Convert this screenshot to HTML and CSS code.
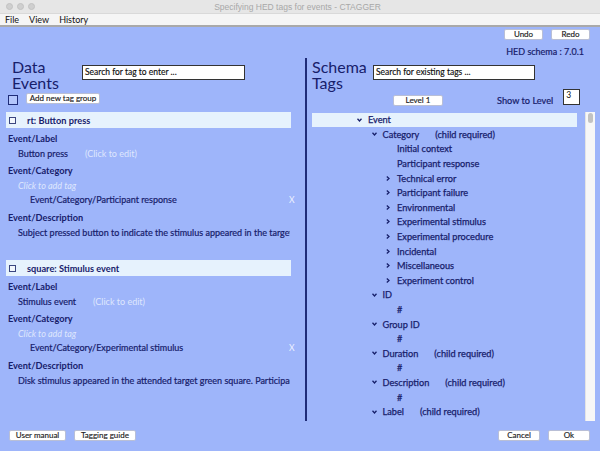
FILE: index.html
```html
<!DOCTYPE html>
<html>
<head>
<meta charset="utf-8">
<link rel="stylesheet" href="styles.css">
</head>
<body>
<div class="window">
  <div class="titlebar">
    <div class="lights"><span></span><span></span><span></span></div>
    <div class="title">Specifying HED tags for events - CTAGGER</div>
  </div>
  <div class="menubar"><span>File</span><span>View</span><span>History</span></div>
  <div class="main">
    <div class="toprow"><div class="btn w-undo">Undo</div><div class="btn w-undo">Redo</div></div>
    <div class="schema-ver">HED schema : 7.0.1</div>
    <div class="panels">
      <section class="left">
        <div class="phead">
          <div class="ptitle"><div>Data</div><div>Events</div></div>
          <div class="search">Search for tag to enter ...</div>
        </div>
        <div class="ctrlrow">
          <span class="cbox big"></span>
          <div class="btn w-add">Add new tag group</div>
        </div>
        <div class="events">
          <div class="event">
            <div class="ehead"><span class="cbox small"></span><span>rt: Button press</span></div>
            <div class="lbl">Event/Label</div>
            <div class="val">Button press<span class="hint">(Click to edit)</span></div>
            <div class="lbl cat">Event/Category</div>
            <div class="add">Click to add tag</div>
            <div class="tag"><span>Event/Category/Participant response</span><span class="x">X</span></div>
            <div class="lbl desc">Event/Description</div>
            <div class="val clip">Subject pressed button to indicate the stimulus appeared in the target location.</div>
          </div>
          <div class="event second">
            <div class="ehead"><span class="cbox small"></span><span>square: Stimulus event</span></div>
            <div class="lbl">Event/Label</div>
            <div class="val">Stimulus event<span class="hint">(Click to edit)</span></div>
            <div class="lbl cat">Event/Category</div>
            <div class="add">Click to add tag</div>
            <div class="tag"><span>Event/Category/Experimental stimulus</span><span class="x">X</span></div>
            <div class="lbl desc">Event/Description</div>
            <div class="val clip">Disk stimulus appeared in the attended target green square. Participant responded.</div>
          </div>
        </div>
      </section>
      <div class="divider"></div>
      <section class="right">
        <div class="phead">
          <div class="ptitle rt"><div>Schema</div><div>Tags</div></div>
          <div class="search rs">Search for existing tags ...</div>
        </div>
        <div class="ctrlrow rctrl">
          <div class="btn w-level">Level 1</div>
          <span class="showlvl">Show to Level</span>
          <div class="lvlbox">3</div>
        </div>
        <div class="treewrap">
          <div class="tree">
            <div class="node l0 sel"><span class="chev"><svg width="5" height="4" viewBox="0 0 5 4"><polyline points="0.5,0.8 2.5,3 4.5,0.8" /></svg></span><span>Event</span></div>
            <div class="node l1"><span class="chev"><svg width="5" height="4" viewBox="0 0 5 4"><polyline points="0.5,0.8 2.5,3 4.5,0.8" /></svg></span><span>Category</span><span class="req">(child required)</span></div>
            <div class="node l2"><span class="chev"></span><span>Initial context</span></div>
            <div class="node l2"><span class="chev"></span><span>Participant response</span></div>
            <div class="node l2"><span class="chev"><svg width="4" height="5" viewBox="0 0 4 5"><polyline points="0.8,0.5 3,2.5 0.8,4.5" /></svg></span><span>Technical error</span></div>
            <div class="node l2"><span class="chev"><svg width="4" height="5" viewBox="0 0 4 5"><polyline points="0.8,0.5 3,2.5 0.8,4.5" /></svg></span><span>Participant failure</span></div>
            <div class="node l2"><span class="chev"><svg width="4" height="5" viewBox="0 0 4 5"><polyline points="0.8,0.5 3,2.5 0.8,4.5" /></svg></span><span>Environmental</span></div>
            <div class="node l2"><span class="chev"><svg width="4" height="5" viewBox="0 0 4 5"><polyline points="0.8,0.5 3,2.5 0.8,4.5" /></svg></span><span>Experimental stimulus</span></div>
            <div class="node l2"><span class="chev"><svg width="4" height="5" viewBox="0 0 4 5"><polyline points="0.8,0.5 3,2.5 0.8,4.5" /></svg></span><span>Experimental procedure</span></div>
            <div class="node l2"><span class="chev"><svg width="4" height="5" viewBox="0 0 4 5"><polyline points="0.8,0.5 3,2.5 0.8,4.5" /></svg></span><span>Incidental</span></div>
            <div class="node l2"><span class="chev"><svg width="4" height="5" viewBox="0 0 4 5"><polyline points="0.8,0.5 3,2.5 0.8,4.5" /></svg></span><span>Miscellaneous</span></div>
            <div class="node l2"><span class="chev"><svg width="4" height="5" viewBox="0 0 4 5"><polyline points="0.8,0.5 3,2.5 0.8,4.5" /></svg></span><span>Experiment control</span></div>
            <div class="node l1"><span class="chev"><svg width="5" height="4" viewBox="0 0 5 4"><polyline points="0.5,0.8 2.5,3 4.5,0.8" /></svg></span><span>ID</span></div>
            <div class="node l2"><span class="chev"></span><span>#</span></div>
            <div class="node l1"><span class="chev"><svg width="5" height="4" viewBox="0 0 5 4"><polyline points="0.5,0.8 2.5,3 4.5,0.8" /></svg></span><span>Group ID</span></div>
            <div class="node l2"><span class="chev"></span><span>#</span></div>
            <div class="node l1"><span class="chev"><svg width="5" height="4" viewBox="0 0 5 4"><polyline points="0.5,0.8 2.5,3 4.5,0.8" /></svg></span><span>Duration</span><span class="req">(child required)</span></div>
            <div class="node l2"><span class="chev"></span><span>#</span></div>
            <div class="node l1"><span class="chev"><svg width="5" height="4" viewBox="0 0 5 4"><polyline points="0.5,0.8 2.5,3 4.5,0.8" /></svg></span><span>Description</span><span class="req">(child required)</span></div>
            <div class="node l2"><span class="chev"></span><span>#</span></div>
            <div class="node l1"><span class="chev"><svg width="5" height="4" viewBox="0 0 5 4"><polyline points="0.5,0.8 2.5,3 4.5,0.8" /></svg></span><span>Label</span><span class="req">(child required)</span></div>
          </div>
          <div class="scrollbar"><div class="thumb"></div></div>
        </div>
      </section>
    </div>
    <div class="footer">
      <div class="fgroup">
        <div class="btn w-manual">User manual</div>
        <div class="btn w-guide">Tagging guide</div>
      </div>
      <div class="fgroup">
        <div class="btn w-ok">Cancel</div>
        <div class="btn w-ok">Ok</div>
      </div>
    </div>
  </div>
</div>
</body>
</html>
```
FILE: styles.css
```css
* { box-sizing: border-box; }
html, body { margin: 0; padding: 0; }
body {
  width: 600px;
  height: 451px;
  overflow: hidden;
  font-family: "Lato", "Open Sans", sans-serif;
  font-size: 9px;
  color: #17206b;
}
.window { width: 600px; height: 451px; display: flex; flex-direction: column; background: #9eb5fa; }

.titlebar {
  height: 13px;
  background: #e6e6e6;
  display: flex;
  align-items: center;
}
.lights { display: flex; gap: 4px; padding-left: 6px; }
.lights span { width: 7px; height: 7px; border-radius: 50%; background: #cfcfcf; border: 1px solid #c2c2c2; }
.title {
  flex: 1;
  text-align: center;
  font-family: "Liberation Sans", sans-serif;
  font-size: 8.5px;
  color: #a8a8a8;
  margin-right: 40px;
}
.menubar {
  height: 14px;
  background: #f5f5f5;
  border-top: 1px solid #d9d9d9;
  border-bottom: 2px solid #a9a9a9;
  display: flex;
  align-items: center;
  padding-left: 5px;
  font-size: 9px;
  color: #111;
}
.menubar span { margin-right: 10px; }

.main { flex: 1; display: flex; flex-direction: column; }

.btn {
  background: #fff;
  border: 1px solid #b9bfd6;
  border-radius: 2px;
  height: 11px;
  font-size: 8px;
  line-height: 9px;
  color: #222;
  text-align: center;
  -webkit-text-stroke: 0.15px #222;
}
.toprow { display: flex; justify-content: flex-end; gap: 8px; padding: 2px 10px 0 0; height: 13px; }
.w-undo { width: 39px; }
.schema-ver { text-align: right; padding-right: 16px; margin-top: 5px; line-height: 14px; height: 12px; font-size: 9px; -webkit-text-stroke: 0.2px #17206b; }

.panels { display: flex; height: 364px; }
.left { width: 305px; padding-left: 6px; }
.divider { width: 2px; background: #1f2c78; margin: 1px 0 0; }
.right { flex: 1; padding-left: 5px; }

.phead { display: flex; height: 36px; }
.ptitle { width: 76px; padding-left: 6px; font-size: 16px; padding-top: 2px; }
.ptitle div { height: 16px; line-height: 16px; }
.ptitle.rt { width: 61px; padding-left: 0; }
.search {
  margin-top: 8px;
  width: 163px;
  height: 15px;
  background: #fff;
  border: 1px solid #333;
  color: #111;
  font-size: 8.5px;
  line-height: 13px;
  padding-left: 2px;
  -webkit-text-stroke: 0.15px #111;
}
.search.rs { width: 162px; }

.ctrlrow { display: flex; align-items: flex-start; height: 19px; }
.cbox { display: inline-block; border: 1px solid #1f2c78; background: #b4c6fb; }
.cbox.big { width: 10px; height: 10px; margin: 2px 8px 0 2px; }
.cbox.small { width: 7px; height: 7px; margin: 0 11px 0 3px; background: #f2f7fd; border-color: #3b4680; }
.w-add { width: 74px; }

.events { width: 290px; overflow: hidden; }
.event.second { margin-top: 20px; }
.ehead {
  width: 285px;
  height: 16px;
  background: #e6f2fd;
  display: flex;
  align-items: center;
  font-weight: 700;
  font-size: 9.2px;
}
.lbl { font-weight: 700; font-size: 9.2px; padding-left: 2px; line-height: 15px; margin-top: 3px; }
.lbl.cat { margin-top: 2px; }
.val { padding-left: 12px; line-height: 15px; white-space: nowrap; -webkit-text-stroke: 0.2px #17206b; }
.val.clip { overflow: hidden; width: 284px; }
.hint { color: #dfe7fd; margin-left: 17px; -webkit-text-stroke: 0; }
.add { padding-left: 12px; line-height: 15px; color: #dfe7fd; font-style: italic; }
.tag { padding-left: 24px; line-height: 14px; display: flex; justify-content: space-between; -webkit-text-stroke: 0.2px #17206b; }
.x { color: #eef2ff; font-size: 8.5px; width: 7px; -webkit-text-stroke: 0; }

.rctrl { height: 19px; }
.w-level { width: 50px; margin-left: 81px; margin-top: 2px; }
.showlvl { margin-left: 54px; margin-top: 2px; font-size: 9.2px; line-height: 11px; -webkit-text-stroke: 0.2px #17206b; }
.lvlbox {
  margin-left: 10px;
  margin-top: -4px;
  width: 17px;
  height: 16px;
  background: #fff;
  border: 1px solid #333;
  color: #111;
  font-size: 8.5px;
  padding-left: 2px;
  line-height: 11px;
}

.treewrap { display: flex; height: 309px; overflow: hidden; }
.tree { width: 265px; padding-top: 0.5px; }
.node { height: 14.6px; display: flex; align-items: center; white-space: nowrap; font-size: 9.2px; -webkit-text-stroke: 0.25px #17206b; }
.node.sel { background: #e6f2fd; }
.node.l0 { padding-left: 45px; }
.node.l1 { padding-left: 59.5px; }
.node.l2 { padding-left: 74px; }
.chev { width: 11px; display: inline-flex; align-items: center; }
.chev svg polyline { fill: none; stroke: #17206b; stroke-width: 1.3; }
.req { margin-left: 16px; }
.scrollbar { width: 10px; margin-left: 8px; background: #f7f7f7; border-left: 1px solid #e4e4e4; padding: 1px 0 0 2px; }
.thumb { width: 5px; height: 10px; border-radius: 3px; background: #c2c2c2; }

.footer { display: flex; justify-content: space-between; padding: 9px 10px 0 9px; }
.fgroup { display: flex; gap: 8px; }
.w-manual { width: 57px; }
.w-guide { width: 62px; }
.w-ok { width: 42px; }
```
